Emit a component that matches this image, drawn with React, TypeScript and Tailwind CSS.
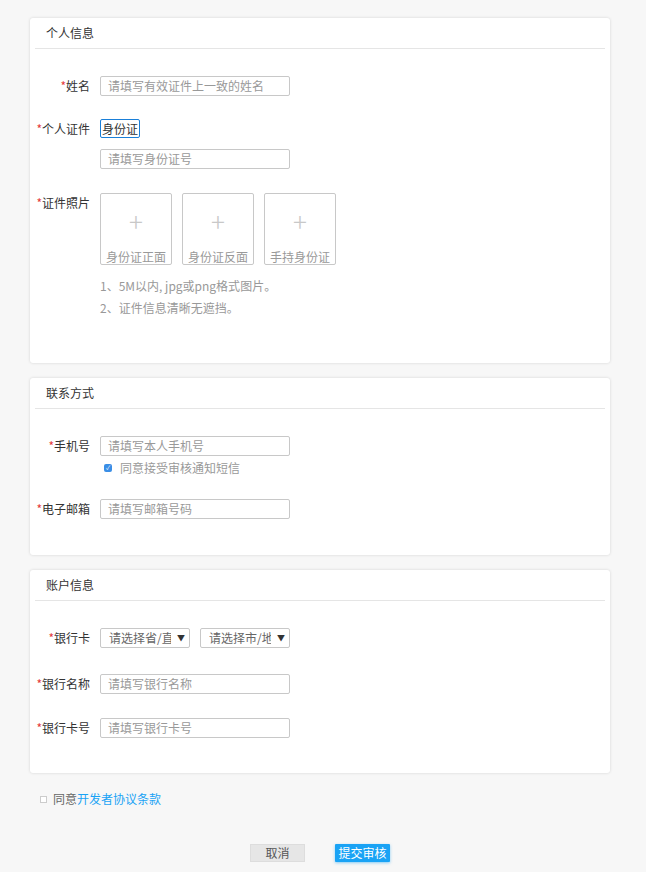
import React from 'react';

const font = { fontFamily: '"Microsoft YaHei", "Noto Sans CJK SC", sans-serif' };

const Card = ({ title, children, cls }: { title: string; children: React.ReactNode; cls: string }) => (
  <div className={`ml-[30px] w-[580px] bg-white rounded-[3px] shadow-[0_0_3px_rgba(0,0,0,0.15)] ${cls}`}>
    <div className="mx-[5px] h-[31px] border-b border-[#e5e5e5] pl-[11px] pt-[7px] text-[12px] leading-[16px] text-[#333]">{title}</div>
    {children}
  </div>
);

const Label = ({ text }: { text: string }) => (
  <div className="w-[60px] text-right text-[12px] text-[#333] leading-[20px] shrink-0">
    <span className="text-[#e4393c]">*</span>
    {text}
  </div>
);

const Input = ({ ph, w = 'w-[190px]' }: { ph: string; w?: string }) => (
  <div className={`${w} h-[20px] border border-[#c8c8c8] rounded-[2px] px-[7px] text-[12px] leading-[18px] text-[#999] overflow-hidden whitespace-nowrap`}>{ph}</div>
);

const Select = ({ ph }: { ph: string }) => (
  <div className="w-[90px] h-[20px] border border-[#c8c8c8] rounded-[2px] pl-[8px] pr-[4px] flex items-center text-[12px] text-[#666]">
    <span className="w-[62px] overflow-hidden whitespace-nowrap leading-[18px]">{ph}</span>
    <span className="ml-auto text-[8px] text-[#333]">▼</span>
  </div>
);

const Photo = ({ text }: { text: string }) => (
  <div className="w-[72px] h-[72px] border border-[#c8c8c8] rounded-[2px] flex flex-col items-center overflow-hidden">
    <div className="mt-[14px] text-[26px] leading-[26px] text-[#c8c8c8] font-light">+</div>
    <div className="mt-auto text-[12px] leading-[14px] text-[#999] whitespace-nowrap">{text}</div>
  </div>
);

export default function App() {
  return (
    <div className="w-[646px] h-[872px] bg-[#f7f7f7] pt-[18px]" style={font}>
      <Card title="个人信息" cls="h-[345px]">
        <div className="flex gap-[10px] mt-[27px]">
          <Label text="姓名" />
          <Input ph="请填写有效证件上一致的姓名" />
        </div>
        <div className="flex gap-[10px] mt-[23px]">
          <Label text="个人证件" />
          <div className="h-[19px] border border-[#1a7fd8] rounded-[2px] px-[1px] text-[12px] leading-[17px] text-[#333]">身份证</div>
        </div>
        <div className="ml-[70px] mt-[10px]">
          <Input ph="请填写身份证号" />
        </div>
        <div className="flex gap-[10px] mt-[24px]">
          <Label text="证件照片" />
          <div>
            <div className="flex gap-[10px]">
              <Photo text="身份证正面" />
              <Photo text="身份证反面" />
              <Photo text="手持身份证" />
            </div>
            <div className="mt-[10px] text-[12px] leading-[22px] text-[#999]">1、5M以内, jpg或png格式图片。</div>
            <div className="text-[12px] leading-[22px] text-[#999]">2、证件信息清晰无遮挡。</div>
          </div>
        </div>
      </Card>
      <Card title="联系方式" cls="h-[177px] mt-[15px]">
        <div className="flex gap-[10px] mt-[27px]">
          <Label text="手机号" />
          <Input ph="请填写本人手机号" />
        </div>
        <div className="ml-[74px] mt-[3px] flex items-center gap-[8px] text-[12px] text-[#999] leading-[18px]">
          <span className="w-[8px] h-[8px] rounded-[2px] bg-[#3a8ee6] text-white text-[6px] leading-[8px] text-center">✓</span>
          同意接受审核通知短信
        </div>
        <div className="flex gap-[10px] mt-[22px]">
          <Label text="电子邮箱" />
          <Input ph="请填写邮箱号码" />
        </div>
      </Card>
      <Card title="账户信息" cls="h-[203px] mt-[15px]">
        <div className="flex gap-[10px] mt-[27px]">
          <Label text="银行卡" />
          <Select ph="请选择省/直辖市" />
          <Select ph="请选择市/地区" />
        </div>
        <div className="flex gap-[10px] mt-[26px]">
          <Label text="银行名称" />
          <Input ph="请填写银行名称" />
        </div>
        <div className="flex gap-[10px] mt-[24px]">
          <Label text="银行卡号" />
          <Input ph="请填写银行卡号" />
        </div>
      </Card>
      <div className="ml-[40px] mt-[17px] flex items-center gap-[6px] text-[12px] text-[#666]">
        <span className="w-[7px] h-[7px] border border-[#ccc] bg-white"></span>
        <span>同意<span className="text-[#1aa3f5]">开发者协议条款</span></span>
      </div>
      <div className="flex justify-center gap-[30px] mt-[36px] pr-[6px]">
        <div className="w-[55px] h-[18px] bg-[#e6e6e6] border border-[#ddd] text-[12px] leading-[16px] text-center text-[#555]">取消</div>
        <div className="w-[55px] h-[18px] bg-[#1aa3f5] rounded-[1px] text-[12px] leading-[18px] text-center text-white shadow-[0_1px_3px_rgba(26,163,245,0.5)]">提交审核</div>
      </div>
    </div>
  );
}
